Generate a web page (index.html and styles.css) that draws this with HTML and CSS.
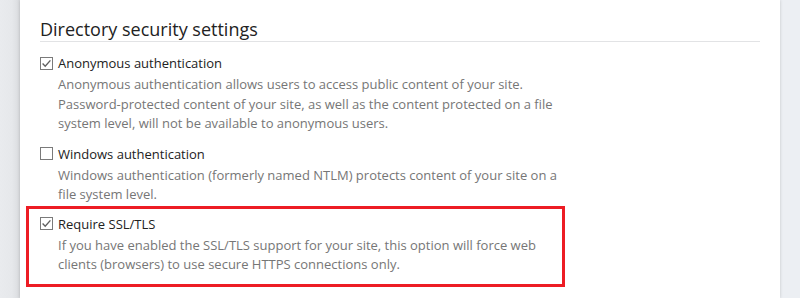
FILE: index.html
```html
<!DOCTYPE html>
<html lang="en">
<head>
<meta charset="utf-8">
<title>Directory security settings</title>
<link rel="stylesheet" href="styles.css">
</head>
<body>
<div class="panel">
  <h2 class="section-title">Directory security settings</h2>

  <div class="option option-first">
    <label class="option-label">
      <svg class="checkbox" width="13" height="13" viewBox="0 0 13 13"><rect x="0.5" y="0.5" width="12" height="12" fill="#fff" stroke="#7a7a7a"/><polyline points="2.6,6.6 5.2,9.2 10.4,3.4" fill="none" stroke="#5f5f5f" stroke-width="1.4"/></svg>
      <span>Anonymous authentication</span>
    </label>
    <p class="option-desc">Anonymous authentication allows users to access public content of your site.<br>Password-protected content of your site, as well as the content protected on a file<br>system level, will not be available to anonymous users.</p>
  </div>

  <div class="option">
    <label class="option-label">
      <svg class="checkbox" width="13" height="13" viewBox="0 0 13 13"><rect x="0.5" y="0.5" width="12" height="12" fill="#fff" stroke="#7a7a7a"/></svg>
      <span>Windows authentication</span>
    </label>
    <p class="option-desc">Windows authentication (formerly named NTLM) protects content of your site on a<br>file system level.</p>
  </div>

  <div class="option option-highlight">
    <label class="option-label">
      <svg class="checkbox" width="13" height="13" viewBox="0 0 13 13"><rect x="0.5" y="0.5" width="12" height="12" fill="#fff" stroke="#7a7a7a"/><polyline points="2.6,6.6 5.2,9.2 10.4,3.4" fill="none" stroke="#5f5f5f" stroke-width="1.4"/></svg>
      <span>Require SSL/TLS</span>
    </label>
    <p class="option-desc">If you have enabled the SSL/TLS support for your site, this option will force web<br>clients (browsers) to use secure HTTPS connections only.</p>
  </div>
</div>
</body>
</html>
```

FILE: styles.css
```css
html, body {
  margin: 0;
  padding: 0;
}

body {
  background: linear-gradient(to right, #e9ebee 0, #e6e8eb 12px, #d9dbde 20px) left top / 20px 100% no-repeat, #eceff3;
  font-family: "Open Sans", "Noto Sans", "Liberation Sans", sans-serif;
  color: #222;
  height: 298px;
  overflow: hidden;
}

.panel {
  margin-left: 20px;
  width: 760px;
  height: 298px;
  box-sizing: border-box;
  background: #fff;
  padding: 17px 20px 0 20px;
  box-shadow: 0 0 3px rgba(0, 0, 0, 0.18);
}

.section-title {
  margin: 0;
  font-size: 18px;
  font-weight: 400;
  line-height: 24px;
  color: #222;
  border-bottom: 1px solid #e2e3e5;
}

.option {
  margin-top: 10px;
}

.option-first {
  margin-top: 11px;
}

.option-label {
  display: flex;
  align-items: center;
  gap: 5px;
  font-size: 13px;
  line-height: 20px;
  color: #222;
}

.checkbox {
  display: block;
  flex: none;
}

.option-desc {
  margin: 2px 0 0 18px;
  font-size: 13px;
  line-height: 19.5px;
  color: #767676;
  white-space: nowrap;
}

.option-highlight {
  margin-top: 1.5px;
  margin-left: -14px;
  width: 539px;
  box-sizing: border-box;
  border: 3px solid #ed1c24;
  padding: 4.5px 0 9.5px 11px;
}
```
